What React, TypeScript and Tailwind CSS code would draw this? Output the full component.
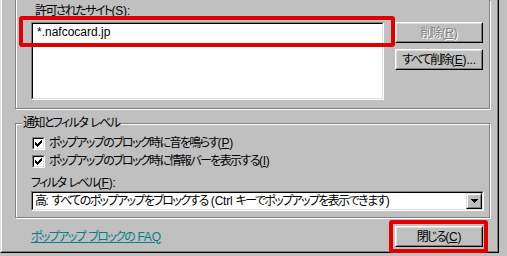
import React from "react";

function U({ children }: { children: React.ReactNode }) {
  return <span className="underline underline-offset-[1px]">{children}</span>;
}

function L({ children }: { children: React.ReactNode }) {
  return <span className="tracking-[-0.2px]">{children}</span>;
}

function Btn({ children, disabled }: { children: React.ReactNode; disabled?: boolean }) {
  return (
    <div className="w-[88px] h-[21px] border border-t-white border-l-white border-r-black border-b-black">
      <div
        className={
          "h-full border border-t-[#dfdfdf] border-l-[#dfdfdf] border-r-[#808080] border-b-[#808080] flex items-center justify-center leading-[14px] whitespace-nowrap " +
          (disabled ? "text-[#808080] [text-shadow:1px_1px_0_#ffffff]" : "text-black")
        }
      >
        {children}
      </div>
    </div>
  );
}

function Check() {
  const px: [number, number][] = [
    [6, 0],
    [5, 1], [6, 1],
    [0, 2], [4, 2], [5, 2], [6, 2],
    [0, 3], [1, 3], [3, 3], [4, 3], [5, 3],
    [0, 4], [1, 4], [2, 4], [3, 4], [4, 4],
    [1, 5], [2, 5], [3, 5],
    [2, 6],
  ];
  return (
    <div className="w-[13px] h-[13px] border border-t-[#808080] border-l-[#808080] border-r-white border-b-white shrink-0">
      <div className="w-full h-full border border-t-black border-l-black border-r-[#dfdfdf] border-b-[#dfdfdf] bg-white flex items-center justify-center">
        <svg width="7" height="7" viewBox="0 0 7 7" shapeRendering="crispEdges">
          {px.map(([x, y], i) => (
            <rect key={i} x={x} y={y} width="1" height="1" fill="#000" />
          ))}
        </svg>
      </div>
    </div>
  );
}

export default function App() {
  return (
    <div className="w-[507px] h-[256px] bg-[#c0c0c0] relative overflow-hidden text-[12px] tracking-[-1.6px] text-black font-['Liberation_Sans','Noto_Sans_CJK_JP',sans-serif] [font-feature-settings:'palt']">
      <div className="w-[499px] h-[253px] border-l border-r border-b border-l-[#dfdfdf] border-r-black border-b-black">
        <div className="h-full border-l border-r border-b border-l-white border-r-[#808080] border-b-[#808080] pl-[13px]">
          {/* upper group */}
          <div className="w-[475px] h-[109px] border-l border-r border-b border-[#808080] shadow-[inset_1px_0_0_#ffffff,1px_1px_0_#ffffff]">
            <div className="pl-[15px] pt-[2px]">
              <div className="ml-[4px] h-[18px] leading-[18px] whitespace-nowrap">
                許可されたサイト<L>(<U>S</U>):</L>
              </div>
              <div className="mt-[2px] flex items-start">
                <div className="w-[353px] h-[78px] border border-t-[#808080] border-l-[#808080] border-r-white border-b-white">
                  <div className="h-full border border-t-black border-l-black border-r-[#dfdfdf] border-b-[#dfdfdf] bg-white">
                    <div className="pl-[4px] pt-[1px] h-[14px] leading-[14px] tracking-normal">*.nafcocard.jp</div>
                  </div>
                </div>
                <div className="ml-[11px] flex flex-col gap-[6px]">
                  <Btn disabled>
                    削除<L>(<U>R</U>)</L>
                  </Btn>
                  <Btn>
                    すべて削除<L>(<U>E</U>)...</L>
                  </Btn>
                </div>
              </div>
            </div>
          </div>

          {/* lower group */}
          <div className="mt-[14px] relative w-[475px] h-[95px] border border-[#808080] shadow-[inset_1px_1px_0_#ffffff,1px_1px_0_#ffffff]">
            <div className="absolute left-[6px] top-[-9px] px-[1px] bg-[#c0c0c0] leading-[16px] whitespace-nowrap">
              通知とフィルタ<L> </L>レベル
            </div>
            <div className="pl-[15px] pt-[13px]">
              <div className="ml-[1px] flex items-center h-[13px]">
                <Check />
                <span className="ml-[4px] leading-[13px] whitespace-nowrap">
                  ポップアップのブロック時に音を鳴らす<L>(<U>P</U>)</L>
                </span>
              </div>
              <div className="ml-[1px] mt-[5px] flex items-center h-[13px]">
                <Check />
                <span className="ml-[4px] leading-[13px] whitespace-nowrap">
                  ポップアップのブロック時に情報バーを表示する<L>(<U>I</U>)</L>
                </span>
              </div>
              <div className="mt-[8px] h-[14px] leading-[14px] whitespace-nowrap">
                フィルタ<L> </L>レベル<L>(<U>F</U>):</L>
              </div>
              <div className="mt-[1px] w-[453px] h-[20px] border border-t-[#808080] border-l-[#808080] border-r-white border-b-white">
                <div className="h-full border border-t-black border-l-black border-r-[#dfdfdf] border-b-[#dfdfdf] bg-white flex items-center">
                  <span className="flex-1 pl-[2px] leading-[16px] whitespace-nowrap overflow-hidden">
                    高<L>: </L>すべてのポップアップをブロックする<L> (Ctrl </L>キーでポップアップを表示できます<L>)</L>
                  </span>
                  <div className="w-[16px] h-[16px] border border-t-[#dfdfdf] border-l-[#dfdfdf] border-r-black border-b-black shrink-0">
                    <div className="h-full border border-t-white border-l-white border-r-[#808080] border-b-[#808080] bg-[#c0c0c0] flex items-center justify-center">
                      <svg width="7" height="4" viewBox="0 0 7 4" shapeRendering="crispEdges">
                        <rect x="0" y="0" width="7" height="1" fill="#000" />
                        <rect x="1" y="1" width="5" height="1" fill="#000" />
                        <rect x="2" y="2" width="3" height="1" fill="#000" />
                        <rect x="3" y="3" width="1" height="1" fill="#000" />
                      </svg>
                    </div>
                  </div>
                </div>
              </div>
            </div>
          </div>

          {/* bottom row */}
          <div className="mt-[8px] w-[475px] flex items-center justify-between">
            <span className="ml-[16px] text-[#008080] underline underline-offset-[1px] leading-[14px] whitespace-nowrap">
              ポップアップ<L> </L>ブロックの<L> FAQ</L>
            </span>
            <div className="mr-[7px]">
              <Btn>
                閉じる<L>(<U>C</U>)</L>
              </Btn>
            </div>
          </div>
        </div>
      </div>

      {/* red highlight overlays */}
      <div className="absolute left-[19px] top-[16px] w-[376px] h-[31px] border-4 border-[#e00000] rounded-[3px]" />
      <div className="absolute left-[389px] top-[220px] w-[99px] h-[33px] border-4 border-[#e00000] rounded-[3px]" />
    </div>
  );
}
